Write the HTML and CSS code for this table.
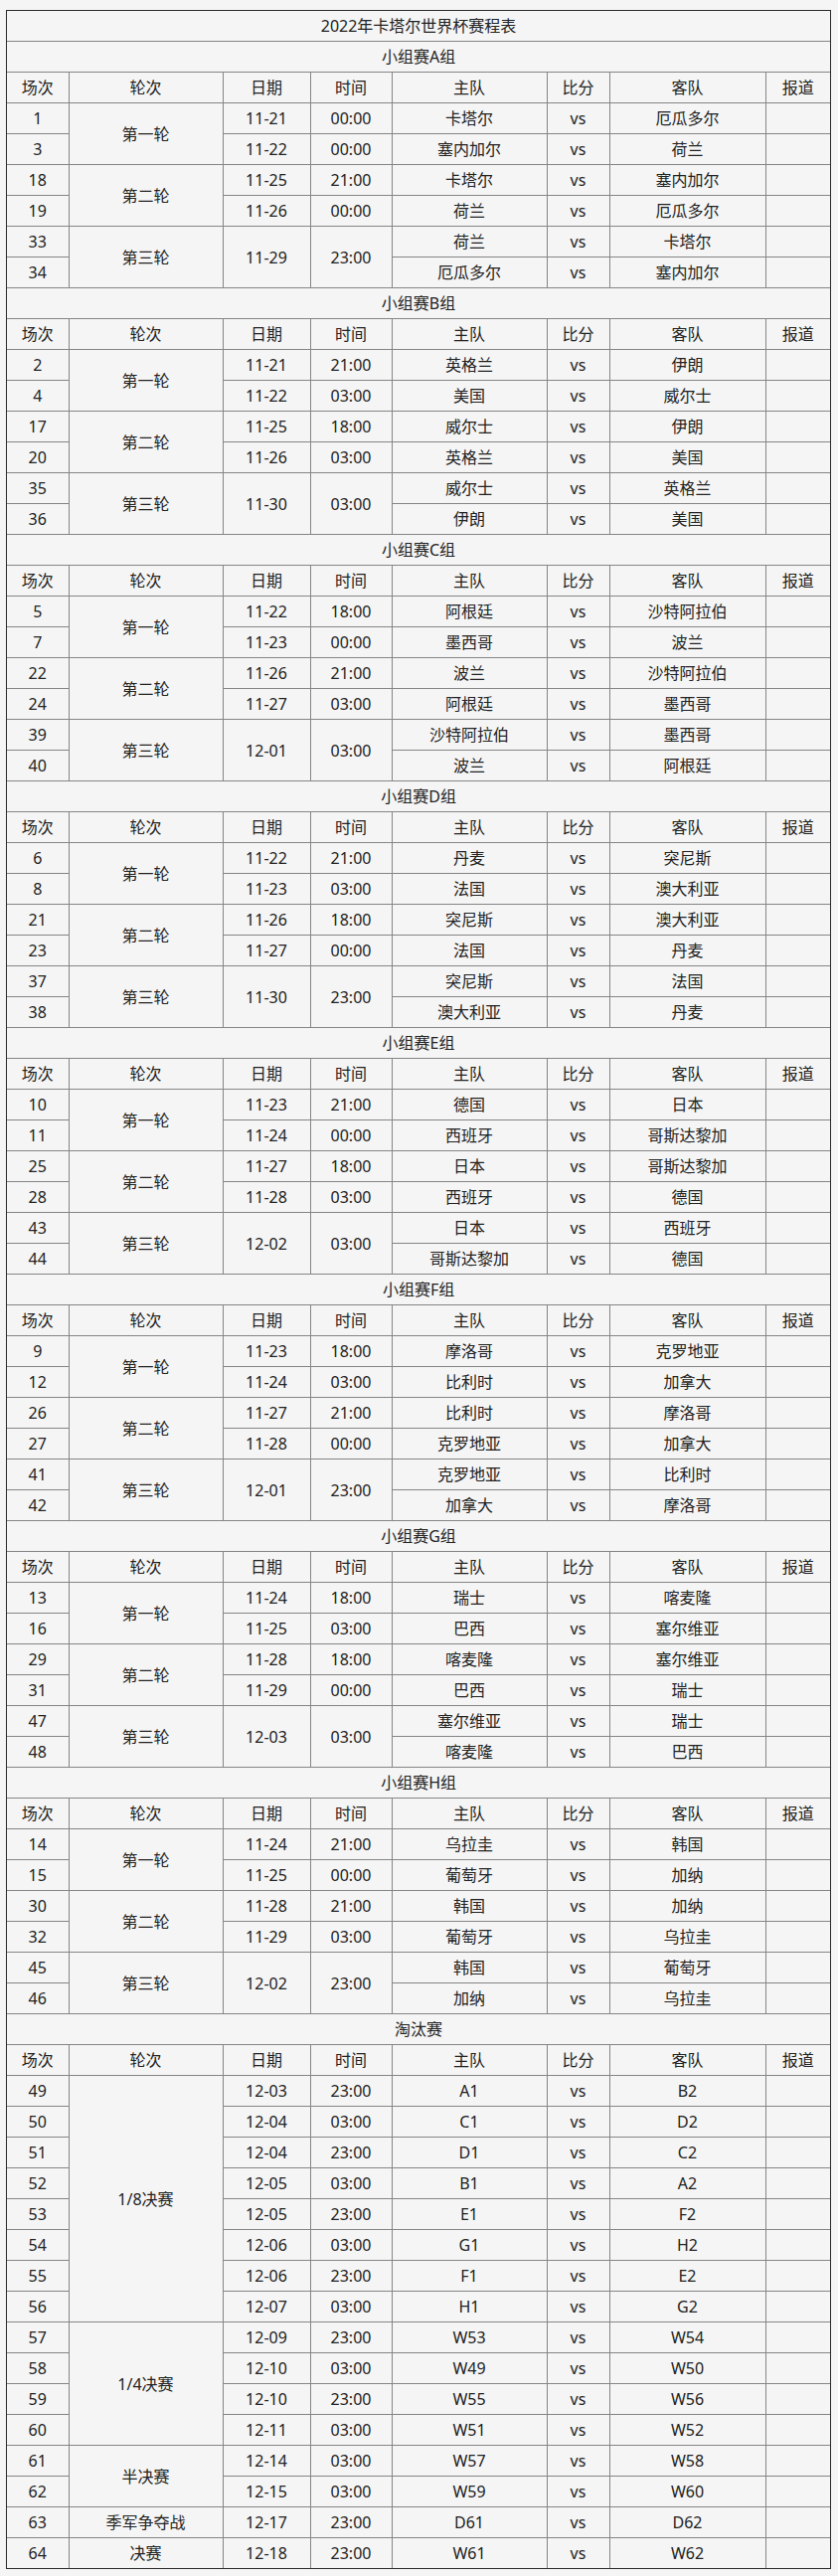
FILE: index.html
```html
<!DOCTYPE html>
<html lang="zh-CN">
<head>
<meta charset="utf-8">
<title>2022年卡塔尔世界杯赛程表</title>
<link rel="stylesheet" href="styles.css">
</head>
<body>
<div class="frame">
<table class="schedule">
<colgroup>
<col class="c1"><col class="c2"><col class="c3"><col class="c4"><col class="c5"><col class="c6"><col class="c7"><col class="c8">
</colgroup>
<tbody>
<tr><td colspan="8">2022年卡塔尔世界杯赛程表</td></tr>

<tr><td colspan="8">小组赛A组</td></tr>
<tr><td>场次</td><td>轮次</td><td>日期</td><td>时间</td><td>主队</td><td>比分</td><td>客队</td><td>报道</td></tr>
<tr><td>1</td><td rowspan="2">第一轮</td><td>11-21</td><td>00:00</td><td>卡塔尔</td><td>vs</td><td>厄瓜多尔</td><td></td></tr>
<tr><td>3</td><td>11-22</td><td>00:00</td><td>塞内加尔</td><td>vs</td><td>荷兰</td><td></td></tr>
<tr><td>18</td><td rowspan="2">第二轮</td><td>11-25</td><td>21:00</td><td>卡塔尔</td><td>vs</td><td>塞内加尔</td><td></td></tr>
<tr><td>19</td><td>11-26</td><td>00:00</td><td>荷兰</td><td>vs</td><td>厄瓜多尔</td><td></td></tr>
<tr><td>33</td><td rowspan="2">第三轮</td><td rowspan="2">11-29</td><td rowspan="2">23:00</td><td>荷兰</td><td>vs</td><td>卡塔尔</td><td></td></tr>
<tr><td>34</td><td>厄瓜多尔</td><td>vs</td><td>塞内加尔</td><td></td></tr>

<tr><td colspan="8">小组赛B组</td></tr>
<tr><td>场次</td><td>轮次</td><td>日期</td><td>时间</td><td>主队</td><td>比分</td><td>客队</td><td>报道</td></tr>
<tr><td>2</td><td rowspan="2">第一轮</td><td>11-21</td><td>21:00</td><td>英格兰</td><td>vs</td><td>伊朗</td><td></td></tr>
<tr><td>4</td><td>11-22</td><td>03:00</td><td>美国</td><td>vs</td><td>威尔士</td><td></td></tr>
<tr><td>17</td><td rowspan="2">第二轮</td><td>11-25</td><td>18:00</td><td>威尔士</td><td>vs</td><td>伊朗</td><td></td></tr>
<tr><td>20</td><td>11-26</td><td>03:00</td><td>英格兰</td><td>vs</td><td>美国</td><td></td></tr>
<tr><td>35</td><td rowspan="2">第三轮</td><td rowspan="2">11-30</td><td rowspan="2">03:00</td><td>威尔士</td><td>vs</td><td>英格兰</td><td></td></tr>
<tr><td>36</td><td>伊朗</td><td>vs</td><td>美国</td><td></td></tr>

<tr><td colspan="8">小组赛C组</td></tr>
<tr><td>场次</td><td>轮次</td><td>日期</td><td>时间</td><td>主队</td><td>比分</td><td>客队</td><td>报道</td></tr>
<tr><td>5</td><td rowspan="2">第一轮</td><td>11-22</td><td>18:00</td><td>阿根廷</td><td>vs</td><td>沙特阿拉伯</td><td></td></tr>
<tr><td>7</td><td>11-23</td><td>00:00</td><td>墨西哥</td><td>vs</td><td>波兰</td><td></td></tr>
<tr><td>22</td><td rowspan="2">第二轮</td><td>11-26</td><td>21:00</td><td>波兰</td><td>vs</td><td>沙特阿拉伯</td><td></td></tr>
<tr><td>24</td><td>11-27</td><td>03:00</td><td>阿根廷</td><td>vs</td><td>墨西哥</td><td></td></tr>
<tr><td>39</td><td rowspan="2">第三轮</td><td rowspan="2">12-01</td><td rowspan="2">03:00</td><td>沙特阿拉伯</td><td>vs</td><td>墨西哥</td><td></td></tr>
<tr><td>40</td><td>波兰</td><td>vs</td><td>阿根廷</td><td></td></tr>

<tr><td colspan="8">小组赛D组</td></tr>
<tr><td>场次</td><td>轮次</td><td>日期</td><td>时间</td><td>主队</td><td>比分</td><td>客队</td><td>报道</td></tr>
<tr><td>6</td><td rowspan="2">第一轮</td><td>11-22</td><td>21:00</td><td>丹麦</td><td>vs</td><td>突尼斯</td><td></td></tr>
<tr><td>8</td><td>11-23</td><td>03:00</td><td>法国</td><td>vs</td><td>澳大利亚</td><td></td></tr>
<tr><td>21</td><td rowspan="2">第二轮</td><td>11-26</td><td>18:00</td><td>突尼斯</td><td>vs</td><td>澳大利亚</td><td></td></tr>
<tr><td>23</td><td>11-27</td><td>00:00</td><td>法国</td><td>vs</td><td>丹麦</td><td></td></tr>
<tr><td>37</td><td rowspan="2">第三轮</td><td rowspan="2">11-30</td><td rowspan="2">23:00</td><td>突尼斯</td><td>vs</td><td>法国</td><td></td></tr>
<tr><td>38</td><td>澳大利亚</td><td>vs</td><td>丹麦</td><td></td></tr>

<tr><td colspan="8">小组赛E组</td></tr>
<tr><td>场次</td><td>轮次</td><td>日期</td><td>时间</td><td>主队</td><td>比分</td><td>客队</td><td>报道</td></tr>
<tr><td>10</td><td rowspan="2">第一轮</td><td>11-23</td><td>21:00</td><td>德国</td><td>vs</td><td>日本</td><td></td></tr>
<tr><td>11</td><td>11-24</td><td>00:00</td><td>西班牙</td><td>vs</td><td>哥斯达黎加</td><td></td></tr>
<tr><td>25</td><td rowspan="2">第二轮</td><td>11-27</td><td>18:00</td><td>日本</td><td>vs</td><td>哥斯达黎加</td><td></td></tr>
<tr><td>28</td><td>11-28</td><td>03:00</td><td>西班牙</td><td>vs</td><td>德国</td><td></td></tr>
<tr><td>43</td><td rowspan="2">第三轮</td><td rowspan="2">12-02</td><td rowspan="2">03:00</td><td>日本</td><td>vs</td><td>西班牙</td><td></td></tr>
<tr><td>44</td><td>哥斯达黎加</td><td>vs</td><td>德国</td><td></td></tr>

<tr><td colspan="8">小组赛F组</td></tr>
<tr><td>场次</td><td>轮次</td><td>日期</td><td>时间</td><td>主队</td><td>比分</td><td>客队</td><td>报道</td></tr>
<tr><td>9</td><td rowspan="2">第一轮</td><td>11-23</td><td>18:00</td><td>摩洛哥</td><td>vs</td><td>克罗地亚</td><td></td></tr>
<tr><td>12</td><td>11-24</td><td>03:00</td><td>比利时</td><td>vs</td><td>加拿大</td><td></td></tr>
<tr><td>26</td><td rowspan="2">第二轮</td><td>11-27</td><td>21:00</td><td>比利时</td><td>vs</td><td>摩洛哥</td><td></td></tr>
<tr><td>27</td><td>11-28</td><td>00:00</td><td>克罗地亚</td><td>vs</td><td>加拿大</td><td></td></tr>
<tr><td>41</td><td rowspan="2">第三轮</td><td rowspan="2">12-01</td><td rowspan="2">23:00</td><td>克罗地亚</td><td>vs</td><td>比利时</td><td></td></tr>
<tr><td>42</td><td>加拿大</td><td>vs</td><td>摩洛哥</td><td></td></tr>

<tr><td colspan="8">小组赛G组</td></tr>
<tr><td>场次</td><td>轮次</td><td>日期</td><td>时间</td><td>主队</td><td>比分</td><td>客队</td><td>报道</td></tr>
<tr><td>13</td><td rowspan="2">第一轮</td><td>11-24</td><td>18:00</td><td>瑞士</td><td>vs</td><td>喀麦隆</td><td></td></tr>
<tr><td>16</td><td>11-25</td><td>03:00</td><td>巴西</td><td>vs</td><td>塞尔维亚</td><td></td></tr>
<tr><td>29</td><td rowspan="2">第二轮</td><td>11-28</td><td>18:00</td><td>喀麦隆</td><td>vs</td><td>塞尔维亚</td><td></td></tr>
<tr><td>31</td><td>11-29</td><td>00:00</td><td>巴西</td><td>vs</td><td>瑞士</td><td></td></tr>
<tr><td>47</td><td rowspan="2">第三轮</td><td rowspan="2">12-03</td><td rowspan="2">03:00</td><td>塞尔维亚</td><td>vs</td><td>瑞士</td><td></td></tr>
<tr><td>48</td><td>喀麦隆</td><td>vs</td><td>巴西</td><td></td></tr>

<tr><td colspan="8">小组赛H组</td></tr>
<tr><td>场次</td><td>轮次</td><td>日期</td><td>时间</td><td>主队</td><td>比分</td><td>客队</td><td>报道</td></tr>
<tr><td>14</td><td rowspan="2">第一轮</td><td>11-24</td><td>21:00</td><td>乌拉圭</td><td>vs</td><td>韩国</td><td></td></tr>
<tr><td>15</td><td>11-25</td><td>00:00</td><td>葡萄牙</td><td>vs</td><td>加纳</td><td></td></tr>
<tr><td>30</td><td rowspan="2">第二轮</td><td>11-28</td><td>21:00</td><td>韩国</td><td>vs</td><td>加纳</td><td></td></tr>
<tr><td>32</td><td>11-29</td><td>03:00</td><td>葡萄牙</td><td>vs</td><td>乌拉圭</td><td></td></tr>
<tr><td>45</td><td rowspan="2">第三轮</td><td rowspan="2">12-02</td><td rowspan="2">23:00</td><td>韩国</td><td>vs</td><td>葡萄牙</td><td></td></tr>
<tr><td>46</td><td>加纳</td><td>vs</td><td>乌拉圭</td><td></td></tr>

<tr><td colspan="8">淘汰赛</td></tr>
<tr><td>场次</td><td>轮次</td><td>日期</td><td>时间</td><td>主队</td><td>比分</td><td>客队</td><td>报道</td></tr>
<tr><td>49</td><td rowspan="8">1/8决赛</td><td>12-03</td><td>23:00</td><td>A1</td><td>vs</td><td>B2</td><td></td></tr>
<tr><td>50</td><td>12-04</td><td>03:00</td><td>C1</td><td>vs</td><td>D2</td><td></td></tr>
<tr><td>51</td><td>12-04</td><td>23:00</td><td>D1</td><td>vs</td><td>C2</td><td></td></tr>
<tr><td>52</td><td>12-05</td><td>03:00</td><td>B1</td><td>vs</td><td>A2</td><td></td></tr>
<tr><td>53</td><td>12-05</td><td>23:00</td><td>E1</td><td>vs</td><td>F2</td><td></td></tr>
<tr><td>54</td><td>12-06</td><td>03:00</td><td>G1</td><td>vs</td><td>H2</td><td></td></tr>
<tr><td>55</td><td>12-06</td><td>23:00</td><td>F1</td><td>vs</td><td>E2</td><td></td></tr>
<tr><td>56</td><td>12-07</td><td>03:00</td><td>H1</td><td>vs</td><td>G2</td><td></td></tr>
<tr><td>57</td><td rowspan="4">1/4决赛</td><td>12-09</td><td>23:00</td><td>W53</td><td>vs</td><td>W54</td><td></td></tr>
<tr><td>58</td><td>12-10</td><td>03:00</td><td>W49</td><td>vs</td><td>W50</td><td></td></tr>
<tr><td>59</td><td>12-10</td><td>23:00</td><td>W55</td><td>vs</td><td>W56</td><td></td></tr>
<tr><td>60</td><td>12-11</td><td>03:00</td><td>W51</td><td>vs</td><td>W52</td><td></td></tr>
<tr><td>61</td><td rowspan="2">半决赛</td><td>12-14</td><td>03:00</td><td>W57</td><td>vs</td><td>W58</td><td></td></tr>
<tr><td>62</td><td>12-15</td><td>03:00</td><td>W59</td><td>vs</td><td>W60</td><td></td></tr>
<tr><td>63</td><td>季军争夺战</td><td>12-17</td><td>23:00</td><td>D61</td><td>vs</td><td>D62</td><td></td></tr>
<tr><td>64</td><td>决赛</td><td>12-18</td><td>23:00</td><td>W61</td><td>vs</td><td>W62</td><td></td></tr>
</tbody>
</table>
</div>
</body>
</html>
```

FILE: styles.css
```css
html, body {
  margin: 0;
  padding: 0;
  background: #f5f5f5;
}

body {
  padding: 10px 0 0 6px;
  font-family: "Noto Sans", "Noto Sans CJK SC", sans-serif;
  font-size: 16px;
  color: #222;
}

.frame {
  width: 828px;
  border: 1px solid #2b2b2b;
}

.schedule {
  width: 828px;
  table-layout: fixed;
  border-collapse: collapse;
  border-style: hidden;
}

.c1 { width: 62px; }
.c2 { width: 155px; }
.c3 { width: 88px; }
.c4 { width: 82px; }
.c5 { width: 156px; }
.c6 { width: 63px; }
.c7 { width: 157px; }
.c8 { width: 65px; }

.schedule td {
  border: 1px solid #858585;
  height: 30px;
  padding: 0;
  line-height: 20px;
  text-align: center;
  vertical-align: middle;
  white-space: nowrap;
}
```
